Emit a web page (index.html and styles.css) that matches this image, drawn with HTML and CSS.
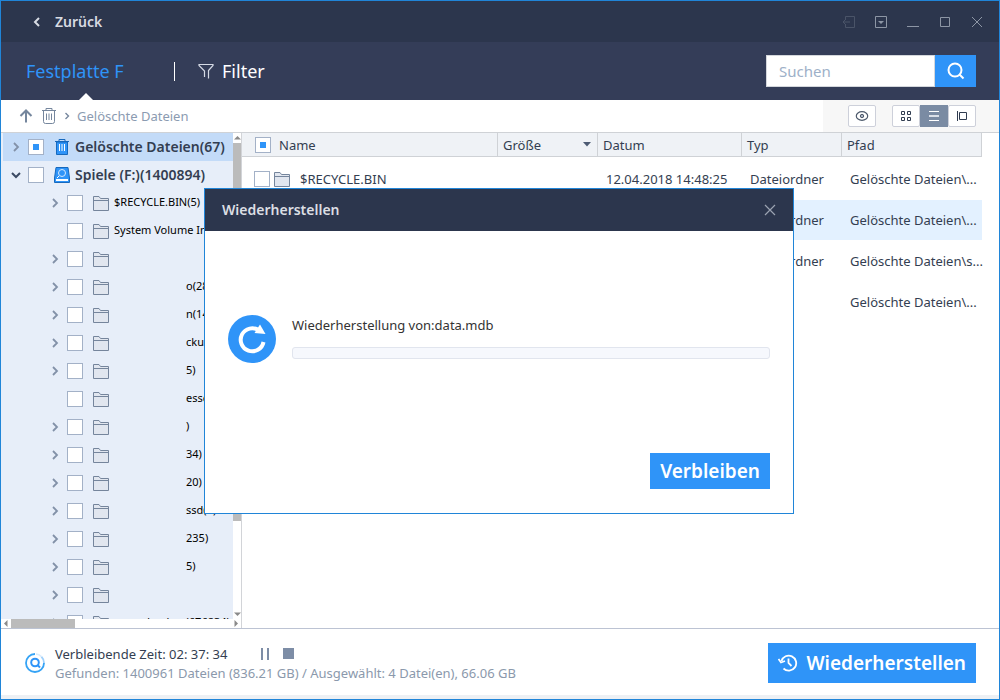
FILE: index.html
```html
<!DOCTYPE html>
<html lang="de">
<head>
<meta charset="utf-8">
<title>Wiederherstellen</title>
<link rel="stylesheet" href="styles.css">
</head>
<body>
<svg class="defs" width="0" height="0" aria-hidden="true">
  <symbol id="folder" viewBox="0 0 16 16"><path d="M.5 15.500V1.500H6L7.500 3.500H15.500V15.500Z" fill="#e1e6ef" stroke="#75859c"/><path d="M1 5.500H15" stroke="#75859c"/></symbol>
  <symbol id="chev" viewBox="0 0 8 10"><path d="M2 1L6 5L2 9" fill="none" stroke="currentColor" stroke-width="1.800"/></symbol>
</svg>
<div class="app">
  <header class="titlebar">
    <button class="back"><svg width="8" height="12" viewBox="0 0 8 12"><path d="M6 2L2 6L6 10" fill="none" stroke="#d8dce4" stroke-width="2"/></svg>Zurück</button>
    <div class="winbtns">
      <button class="dim" aria-label="Abmelden"><svg width="14" height="14" viewBox="0 0 14 14"><path d="M3.500 4V1.500H12.500V12.500H3.500V10M8 7H1M4 4L1 7L4 10" fill="none" stroke="currentColor"/></svg></button>
      <button aria-label="Menü"><svg width="14" height="14" viewBox="0 0 14 14"><path d="M1.500 1.500H12.500V12.500H1.500Z" fill="none" stroke="currentColor"/><path d="M4 6H10L7 9Z" fill="currentColor"/></svg></button>
      <button aria-label="Minimieren"><svg width="14" height="14" viewBox="0 0 14 14"><path d="M1 11.500H13" stroke="currentColor"/></svg></button>
      <button aria-label="Maximieren"><svg width="14" height="14" viewBox="0 0 14 14"><path d="M2.500 2.500H11.500V11.500H2.500Z" fill="none" stroke="currentColor"/></svg></button>
      <button aria-label="Schließen"><svg width="14" height="14" viewBox="0 0 14 14"><path d="M2 2L12 12M12 2L2 12" stroke="currentColor"/></svg></button>
    </div>
  </header>
  <nav class="nav">
    <a class="tab" href="#">Festplatte F</a>
    <span class="bar"></span>
    <button class="filter"><svg width="16" height="16" viewBox="0 0 16 16"><path d="M6.500 14V8L1 2.500V1.500H15V2.500L10.500 7.500V15.500" fill="none" stroke="#d5dae5" stroke-width="1.200"/></svg>Filter</button>
    <form class="search"><input type="text" placeholder="Suchen" aria-label="Suchen"><button type="button" aria-label="Suche starten"><svg width="18" height="18" viewBox="0 0 18 18"><circle cx="8" cy="8" r="6.500" fill="none" stroke="#fff" stroke-width="2"/><path d="M12.500 12.500L16.500 16.500" stroke="#fff" stroke-width="2"/></svg></button></form>
  </nav>
  <div class="toolbar">
    <div class="crumbs">
      <svg width="14" height="14" viewBox="0 0 14 14"><path d="M7 13.500V2M1.500 7L7 1.500L12.500 7" fill="none" stroke="#75869d" stroke-width="2"/></svg>
      <svg width="16" height="16" viewBox="0 0 16 16"><path d="M1 2.500H15M5 2.500V.500H11V2.500M2.500 3V13.500Q2.500 15.500 4.500 15.500H11.500Q13.500 15.500 13.500 13.500V3M5.500 5.500V12M8 5.500V12M10.500 5.500V12" fill="none" stroke="#75869d"/></svg>
      <svg class="small" width="6" height="8" viewBox="0 0 8 10"><use href="#chev"/></svg>
      <span>Gelöschte Dateien</span>
    </div>
    <div class="tools">
      <button class="tool" aria-label="Vorschau"><svg width="14" height="14" viewBox="0 0 14 14"><ellipse cx="7" cy="7" rx="5.700" ry="4.300" fill="none" stroke="#4e5a6c" stroke-width="1.200"/><circle cx="7" cy="7" r="1.700" fill="#aab2bf" stroke="#4e5a6c"/></svg></button>
      <div class="views">
        <button class="tool" aria-label="Kacheln"><svg width="12" height="12" viewBox="0 0 12 12"><path d="M1.500 1.500H4.500V4.500H1.500ZM7.500 1.500H10.500V4.500H7.500ZM1.500 7.500H4.500V10.500H1.500ZM7.500 7.500H10.500V10.500H7.500Z" fill="none" stroke="#303c50"/></svg></button>
        <button class="tool on" aria-label="Liste"><svg width="12" height="12" viewBox="0 0 12 12"><path d="M1 1.500H11M1 10.500H11" stroke="#fff"/><path d="M1 6H11" stroke="#dbe0e8" stroke-width="2"/></svg></button>
        <button class="tool" aria-label="Details"><svg width="12" height="12" viewBox="0 0 12 12"><path d="M1.500 1V11M3.500 2.500H10.500V9.500H3.500Z" fill="none" stroke="#303c50"/></svg></button>
      </div>
    </div>
  </div>
  <main class="main">
    <aside class="side">
      <div class="sidetop">
        <ul class="tree">
          <li class="root sel"><svg class="ar"><use href="#chev"/></svg><input type="checkbox" class="cb part" aria-label="Gelöschte Dateien"><svg class="ic" viewBox="0 0 16 16"><path d="M1 2.500H15M5 2.500V.500H11V2.500" fill="none" stroke="#1769bd"/><path d="M2.500 3V15.500H13.500V3Z" fill="#2f94f8" stroke="#1769bd"/><path d="M5.500 5V12M8 5V12M10.500 5V12" stroke="#fff"/></svg><b>Gelöschte Dateien(67)</b></li>
          <li class="root"><svg class="ar open" viewBox="0 0 10 8"><path d="M1 2L5 6L9 2" fill="none" stroke="#3b4a63" stroke-width="2"/></svg><input type="checkbox" class="cb" aria-label="Spiele (F:)"><svg class="ic" viewBox="0 0 16 16"><path d="M2 .500H14L15.500 11V15.500H.500V11Z" fill="#2f94f8" stroke="#1769bd"/><circle cx="8" cy="6" r="3.500" fill="none" stroke="#d5e9ff"/><path d="M2 13H14" stroke="#fff" stroke-width="2"/><path d="M5 9L3 11" stroke="#fff"/></svg><b>Spiele (F:)(1400894)</b></li>
          <li><svg class="ar"><use href="#chev"/></svg><input type="checkbox" class="cb" aria-label="$RECYCLE.BIN"><svg class="ic"><use href="#folder"/></svg><span>$RECYCLE.BIN(5)</span></li>
          <li><i class="ar"></i><input type="checkbox" class="cb" aria-label="System Volume Information"><svg class="ic"><use href="#folder"/></svg><span>System Volume Inf</span></li>
          <li><svg class="ar"><use href="#chev"/></svg><input type="checkbox" class="cb" aria-label="Ordner"><svg class="ic"><use href="#folder"/></svg></li>
          <li><svg class="ar"><use href="#chev"/></svg><input type="checkbox" class="cb" aria-label="Ordner"><svg class="ic"><use href="#folder"/></svg><span class="end">o(28)</span></li>
          <li><svg class="ar"><use href="#chev"/></svg><input type="checkbox" class="cb" aria-label="Ordner"><svg class="ic"><use href="#folder"/></svg><span class="end">n(14)</span></li>
          <li><svg class="ar"><use href="#chev"/></svg><input type="checkbox" class="cb" aria-label="Ordner"><svg class="ic"><use href="#folder"/></svg><span class="end">ckup</span></li>
          <li><svg class="ar"><use href="#chev"/></svg><input type="checkbox" class="cb" aria-label="Ordner"><svg class="ic"><use href="#folder"/></svg><span class="end">5)</span></li>
          <li><i class="ar"></i><input type="checkbox" class="cb" aria-label="Ordner"><svg class="ic"><use href="#folder"/></svg><span class="end">esse</span></li>
          <li><svg class="ar"><use href="#chev"/></svg><input type="checkbox" class="cb" aria-label="Ordner"><svg class="ic"><use href="#folder"/></svg><span class="end">)</span></li>
          <li><svg class="ar"><use href="#chev"/></svg><input type="checkbox" class="cb" aria-label="Ordner"><svg class="ic"><use href="#folder"/></svg><span class="end">34)</span></li>
          <li><svg class="ar"><use href="#chev"/></svg><input type="checkbox" class="cb" aria-label="Ordner"><svg class="ic"><use href="#folder"/></svg><span class="end">20)</span></li>
          <li><svg class="ar"><use href="#chev"/></svg><input type="checkbox" class="cb" aria-label="Ordner"><svg class="ic"><use href="#folder"/></svg><span class="end">ssd(1)</span></li>
          <li><svg class="ar"><use href="#chev"/></svg><input type="checkbox" class="cb" aria-label="Ordner"><svg class="ic"><use href="#folder"/></svg><span class="end">235)</span></li>
          <li><svg class="ar"><use href="#chev"/></svg><input type="checkbox" class="cb" aria-label="Ordner"><svg class="ic"><use href="#folder"/></svg><span class="end">5)</span></li>
          <li><svg class="ar"><use href="#chev"/></svg><input type="checkbox" class="cb" aria-label="Ordner"><svg class="ic"><use href="#folder"/></svg></li>
          <li><svg class="ar"><use href="#chev"/></svg><input type="checkbox" class="cb" aria-label="Ordner"><svg class="ic"><use href="#folder"/></svg><span class="last">ausdrucken(676834)</span></li>
        </ul>
        <div class="vscroll"><svg width="7" height="5" viewBox="0 0 7 5"><path d="M0 4.500L3.500 1L7 4.500Z" fill="#8a8a8a"/></svg><i></i><svg width="7" height="5" viewBox="0 0 7 5"><path d="M0 .500L3.500 4L7 .500Z" fill="#8a8a8a"/></svg></div>
      </div>
      <div class="hscroll"><svg width="5" height="7" viewBox="0 0 5 7"><path d="M4.500 0L1 3.500L4.500 7Z" fill="#8a8a8a"/></svg><i></i><svg width="5" height="7" viewBox="0 0 5 7"><path d="M.500 0L4 3.500L.500 7Z" fill="#8a8a8a"/></svg></div>
    </aside>
    <section class="files">
      <table>
        <colgroup><col><col class="c-size"><col class="c-date"><col class="c-type"><col class="c-path"></colgroup>
        <thead><tr><th><div class="cell"><input type="checkbox" class="cb part" aria-label="Alle auswählen">Name</div></th><th><div class="cell sort">Größe<svg width="8" height="5" viewBox="0 0 8 5"><path d="M0 0H8L4 4.500Z" fill="#4d5b73"/></svg></div></th><th>Datum</th><th>Typ</th><th>Pfad</th></tr></thead>
        <tbody>
          <tr class="first"><td><div class="cell"><input type="checkbox" class="cb" aria-label="$RECYCLE.BIN"><svg class="ic"><use href="#folder"/></svg><span>$RECYCLE.BIN</span></div></td><td></td><td>12.04.2018 14:48:25</td><td>Dateiordner</td><td>Gelöschte Dateien\...</td></tr>
          <tr class="hl"><td></td><td></td><td></td><td>Dateiordner</td><td>Gelöschte Dateien\...</td></tr>
          <tr><td></td><td></td><td></td><td>Dateiordner</td><td>Gelöschte Dateien\s...</td></tr>
          <tr><td></td><td></td><td></td><td></td><td>Gelöschte Dateien\...</td></tr>
        </tbody>
      </table>
    </section>
  </main>
  <footer class="footer">
    <svg width="20" height="20" viewBox="0 0 20 20"><path d="M16.400 3.600A9 9 0 0 1 19 10" fill="none" stroke="#9fd0fb" stroke-width="1.800"/><path d="M19 10A9 9 0 1 1 10 1" fill="none" stroke="#35a3f5" stroke-width="1.800"/><path d="M11 1.100A9 9 0 0 1 16.400 3.600" fill="none" stroke="#d9ebfc" stroke-width="1.500"/><circle cx="10" cy="9.500" r="3.800" fill="none" stroke="#2f94f8" stroke-width="2"/><path d="M12.500 12L15 14.500" stroke="#2f94f8" stroke-width="2"/></svg>
    <div class="status">
      <div class="time">Verbleibende Zeit: 02: 37: 34<button aria-label="Pause"><svg width="8" height="12" viewBox="0 0 8 12"><path d="M1 0V12M7 0V12" stroke="#7d8da6" stroke-width="2"/></svg></button><button aria-label="Stopp"><svg width="11" height="11" viewBox="0 0 11 11"><path d="M0 0H11V11H0Z" fill="#7d8da6"/></svg></button></div>
      <div class="found">Gefunden: 1400961 Dateien (836.21 GB) / Ausgewählt: 4 Datei(en), 66.06 GB</div>
    </div>
    <button class="primary recover"><svg width="20" height="18" viewBox="0 0 20 18"><path d="M3.500 7A7.500 7.500 0 1 1 5.500 14.500" fill="none" stroke="#fff" stroke-width="1.800"/><path d="M.500 5L3 8.500L7 7" fill="none" stroke="#fff" stroke-width="1.800"/><path d="M10.500 4.500V9L13.500 12" fill="none" stroke="#fff" stroke-width="1.800"/></svg>Wiederherstellen</button>
  </footer>
  <div class="dialog" role="dialog" aria-labelledby="dlg">
    <div class="dhead"><h2 id="dlg">Wiederherstellen</h2><button aria-label="Schließen"><svg width="12" height="12" viewBox="0 0 12 12"><path d="M1 1L11 11M11 1L1 11" stroke="#9ba3b1" stroke-width="1.200"/></svg></button></div>
    <div class="dbody">
      <svg width="48" height="48" viewBox="0 0 48 48"><circle cx="24" cy="24" r="24" fill="#2f94f8"/><path d="M35.500 27A11.500 11.500 0 1 1 31 15.500" fill="none" stroke="#fff" stroke-width="4"/><path d="M32 9.500L37.500 19L26.500 18Z" fill="#fff"/></svg>
      <div class="prog"><span>Wiederherstellung von:data.mdb</span><div class="track" role="progressbar" aria-valuenow="0" aria-label="Fortschritt"></div></div>
    </div>
    <div class="dfoot"><button class="primary">Verbleiben</button></div>
  </div>
</div>
</body>
</html>
```
FILE: styles.css
```css
* { box-sizing: border-box; }
body { margin: 0; font: 13px/18px "Noto Sans", "Open Sans", sans-serif; color: #333e51; }
button { border: 0; background: none; padding: 0; font: inherit; color: inherit; display: flex; align-items: center; justify-content: center; }
svg { flex: none; display: block; }
.defs { position: absolute; }
.app { position: relative; height: 100vh; display: flex; flex-direction: column; border: 1px solid #2085d8; background: #fff; }

.titlebar { height: 41px; flex: none; background: #2c364d; display: flex; align-items: center; justify-content: space-between; padding: 0 15px 0 32px; }
.back { gap: 14px; color: #d8dbe2; font-size: 14px; font-weight: 600; }
.winbtns { display: flex; gap: 18px; color: #8d96a5; }
.winbtns .dim { color: #4a5468; }

.nav { height: 58px; flex: none; background: #343d58; display: flex; align-items: center; padding: 0 23px 0 25px; font-size: 18px; line-height: 24px; }
.tab { position: relative; width: 148px; color: #2f94f8; text-decoration: none; height: 58px; line-height: 58px; }
.tab::after { content: ""; position: absolute; left: 53px; bottom: 0; border: 7px solid transparent; border-top: 0; border-bottom-color: #fff; }
.bar { width: 1px; height: 19px; background: #fff; margin-right: 23px; }
.filter { color: #fff; gap: 8px; }
.search { margin-left: auto; display: flex; height: 32px; }
.search input { width: 169px; border: 1px solid #d4d7dc; padding: 0 12px; font: 15px/20px "Noto Sans", sans-serif; background: #fff; border-radius: 0; }
.search input::placeholder { color: #9db0c8; opacity: 1; }
.search button { width: 41px; background: #2f94f8; }

.toolbar { height: 33px; flex: none; display: flex; justify-content: space-between; border-bottom: 1px solid #cfd2d6; }
.crumbs { display: flex; align-items: center; gap: 8px; padding-left: 18px; color: #8b9bb1; }
.crumbs .small { margin: 0 -1px; color: #75869d; }
.tools { display: flex; align-items: center; gap: 16px; background: #f7f7f7; padding: 0 23px 0 25px; }
.tool { width: 28px; height: 22px; background: #fff; border: 1px solid #cdd0da; border-radius: 2px; }
.views { display: flex; }
.tool.on { background: #7a8ba3; border-color: #7a8ba3; border-radius: 0; }

.main { flex: 1; min-height: 0; display: flex; }
.side { width: 241px; flex: none; display: flex; flex-direction: column; border-right: 1px solid #d2d4d8; background: #fff; }
.sidetop { flex: 1; min-height: 0; display: flex; overflow: hidden; }
.tree { flex: 1; margin: 0; padding: 0 0 0 2px; list-style: none; background: #e7eef9; overflow: hidden; min-width: 0; }
.tree li { height: 28px; display: flex; align-items: center; padding-left: 47px; color: #000; font-size: 11px; white-space: nowrap; }
.tree .root { padding-left: 8px; color: #333e51; font-size: 14px; }
.tree .sel { background: #c3dbf8; }
.ar { width: 10px; height: 10px; flex: none; color: #8291a8; margin-right: 7px; }
.cb { appearance: none; flex: none; width: 16px; height: 16px; margin: 0; border: 1px solid #a3b1c7; background: #fff; }
.cb.part { background: linear-gradient(#2f94f8, #2f94f8) center / 6px 6px no-repeat #fff; }
.ic { width: 16px; height: 16px; margin: 0 5px 0 10px; }
.tree b { font-weight: 600; }
.tree span { line-height: 18px; padding-bottom: 2px; }
.tree .end { margin-left: 72px; }
.tree .last { margin-left: 11px; }
.vscroll { width: 8px; flex: none; display: flex; flex-direction: column; align-items: center; padding: 2px 0; gap: 3px; }
.vscroll i { width: 8px; height: 378px; background: #bbb; }
.vscroll svg:last-child { margin-top: auto; }
.hscroll { height: 9px; flex: none; display: flex; align-items: center; gap: 3px; padding: 0 2px; }
.hscroll i { width: 64px; height: 9px; background: #bbb; }
.hscroll svg:last-child { margin-left: auto; }

.files { flex: 1; min-width: 0; padding-right: 17px; }
table { width: 100%; table-layout: fixed; border-collapse: separate; border-spacing: 0; }
.c-size { width: 100px; }
.c-date { width: 144px; }
.c-type { width: 100px; }
.c-path { width: 140px; }
th { height: 24px; padding: 0 0 0 5px; background: #eff2f6; border-right: 1px solid #cfd2d6; border-bottom: 1px solid #cfd2d6; text-align: left; font-weight: 400; }
th:first-child { padding-left: 13px; }
.cell { display: flex; align-items: center; }
th .cb { margin-right: 8px; }
.sort { justify-content: space-between; padding-right: 6px; }
td { height: 41px; padding: 0 0 0 8px; white-space: nowrap; border-bottom: 1px solid #fff; }
.first td { height: 43px; padding-top: 2px; }
td:first-child { padding-left: 12px; }
td .ic { margin: 0 10px 0 4px; }
.hl td { background: #e3f1ff; }

.footer { height: 71px; flex: none; display: flex; align-items: center; border-top: 1px solid #bcc3d3; border-bottom: 4px solid #edf0f4; padding: 2px 23px 0 24px; gap: 10px; }
.status { display: grid; gap: 1px; }
.time { display: flex; align-items: center; }
.time button { margin-left: 14px; }
.time button:first-child { margin-left: 34px; }
.found { color: #8b99ac; }
.primary { background: #2f94f8; color: #fff; font-size: 19px; line-height: 24px; font-weight: 600; padding: 6px 10px; }
.recover { margin-left: auto; padding: 8px 10px; gap: 8px; }

.dialog { position: absolute; left: 203px; top: 187px; width: 590px; height: 326px; border: 1px solid #2085d8; background: #fff; display: flex; flex-direction: column; }
.dhead { height: 42px; background: #2c364d; display: flex; align-items: center; justify-content: space-between; padding: 0 17px; }
.dhead h2 { margin: 0; font-size: 14px; line-height: 18px; font-weight: 600; color: #dcdfe4; }
.dbody { display: flex; align-items: center; gap: 16px; padding: 84px 23px 0; }
.prog { flex: 1; display: grid; gap: 13px; padding-bottom: 3px; color: #333; }
.track { height: 12px; border: 1px solid #e1e5ee; border-radius: 3px; background: #f6f8fd; }
.dfoot { margin-top: auto; display: flex; justify-content: flex-end; padding: 0 23px 24px; }
```
